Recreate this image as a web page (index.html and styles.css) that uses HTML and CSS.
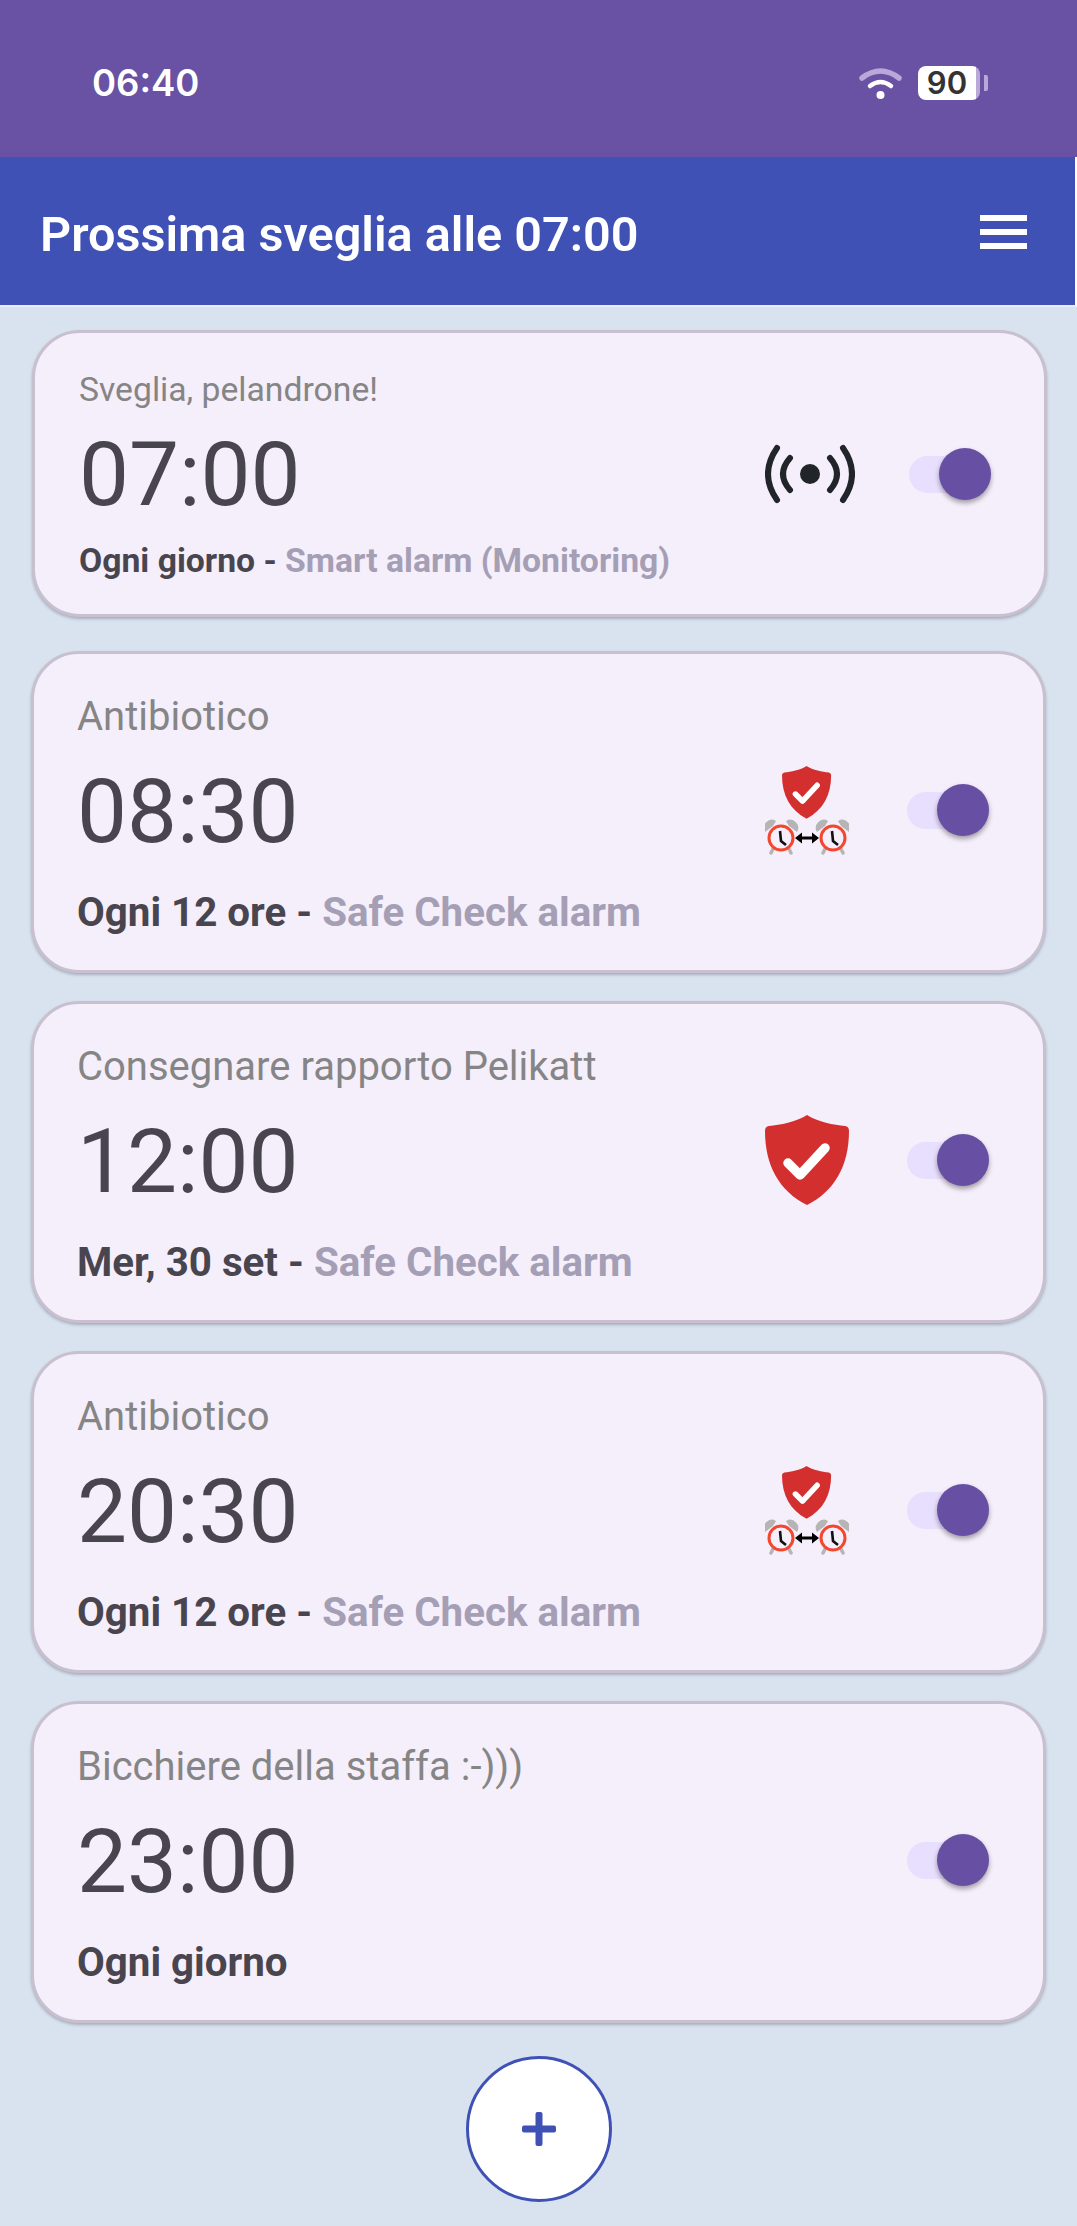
FILE: index.html
```html
<!DOCTYPE html>
<html lang="it">
<head>
  <meta charset="UTF-8">
  <meta name="viewport" content="width=device-width, initial-scale=1.0">
  <title>Sveglie</title>
  <link rel="stylesheet" href="styles.css">
</head>
<body>
  <svg class="defs" width="0" height="0" aria-hidden="true">
    <defs>
      <g id="shield">
        <path d="M42 0C31 7 15 10 4 11Q0 11.500 0 16C0 50 14 76 42 90C70 76 84 50 84 16Q84 11.500 80 11C69 10 53 7 42 0Z" fill="#d32f2f"></path>
        <path d="M23 48L35 60L60 33" fill="none" stroke="#fff" stroke-width="9.500" stroke-linecap="round" stroke-linejoin="round"></path>
      </g>
      <g id="clock">
        <path d="M-16 -6A8 8 0 0 1 -5 -17L-8 -12L-12 -9ZM16 -6A8 8 0 0 0 5 -17L8 -12L12 -9Z" fill="#b5b5b5"></path>
        <path d="M-8 11L-10 15M8 11L10 15" stroke="#b5b5b5" stroke-width="3.500" stroke-linecap="round"></path>
        <circle r="12" fill="#f5eefb" stroke="#f4472f" stroke-width="3"></circle>
        <path d="M-1 -7L0 3L5 7" fill="none" stroke="#111" stroke-width="2.600"></path>
      </g>
      <g id="shield-clocks">
        <use href="#shield" transform="translate(17 1) scale(0.585)"></use>
        <use href="#clock" transform="translate(16 73)"></use>
        <use href="#clock" transform="translate(68 73)"></use>
        <path d="M34 73H50" stroke="#000" stroke-width="3"></path>
        <path d="M37 67.500L30 73L37 78.500ZM47 67.500L54 73L47 78.500Z" fill="#000"></path>
      </g>
    </defs>
  </svg>

  <div class="status-bar">
    <span class="clock">06:40</span>
    <div class="status-icons">
      <svg class="wifi" width="43" height="32" viewBox="0 0 43 32">
        <path d="M3 11Q21.500 -3 40 11" fill="none" stroke="#b9a8d8" stroke-width="5.500" stroke-linecap="round"></path>
        <path d="M11 19Q21.500 11 32 19" fill="none" stroke="#fff" stroke-width="4.500" stroke-linecap="round"></path>
        <circle cx="21.500" cy="28" r="4" fill="#fff"></circle>
      </svg>
      <div class="battery"><span>90</span></div>
      <div class="battery-nub"></div>
    </div>
  </div>

  <header class="app-bar">
    <h1>Prossima sveglia alle 07:00</h1>
    <div class="menu-button"><i></i><i></i><i></i></div>
  </header>

  <main class="alarm-list">
    <div class="alarm alarm-first">
      <div class="alarm-title">Sveglia, pelandrone!</div>
      <div class="alarm-row">
        <div class="alarm-time">07:00</div>
        <svg class="alarm-icon" width="90" height="60" viewBox="-45 -30 90 60">
          <g fill="none" stroke="#212529" stroke-width="6" stroke-linecap="round">
            <path d="M-33 -26Q-51 0 -33 26M33 -26Q51 0 33 26"></path>
            <path d="M-20 -16Q-34 0 -20 16M20 -16Q34 0 20 16"></path>
          </g>
          <circle r="10" fill="#212529"></circle>
        </svg>
        <div class="toggle"><div class="thumb"></div></div>
      </div>
      <div class="alarm-info"><b>Ogni giorno - </b><span>Smart alarm (Monitoring)</span></div>
    </div>

    <div class="alarm">
      <div class="alarm-title">Antibiotico</div>
      <div class="alarm-row">
        <div class="alarm-time">08:30</div>
        <svg class="alarm-icon" width="84" height="90" viewBox="0 0 84 90"><use href="#shield-clocks"></use></svg>
        <div class="toggle"><div class="thumb"></div></div>
      </div>
      <div class="alarm-info"><b>Ogni 12 ore - </b><span>Safe Check alarm</span></div>
    </div>

    <div class="alarm">
      <div class="alarm-title">Consegnare rapporto Pelikatt</div>
      <div class="alarm-row">
        <div class="alarm-time">12:00</div>
        <svg class="alarm-icon" width="84" height="90" viewBox="0 0 84 90"><use href="#shield"></use></svg>
        <div class="toggle"><div class="thumb"></div></div>
      </div>
      <div class="alarm-info"><b>Mer, 30 set - </b><span>Safe Check alarm</span></div>
    </div>

    <div class="alarm">
      <div class="alarm-title">Antibiotico</div>
      <div class="alarm-row">
        <div class="alarm-time">20:30</div>
        <svg class="alarm-icon" width="84" height="90" viewBox="0 0 84 90"><use href="#shield-clocks"></use></svg>
        <div class="toggle"><div class="thumb"></div></div>
      </div>
      <div class="alarm-info"><b>Ogni 12 ore - </b><span>Safe Check alarm</span></div>
    </div>

    <div class="alarm">
      <div class="alarm-title">Bicchiere della staffa :-)))</div>
      <div class="alarm-row">
        <div class="alarm-time">23:00</div>
        <div class="toggle"><div class="thumb"></div></div>
      </div>
      <div class="alarm-info"><b>Ogni giorno</b></div>
    </div>
  </main>

  <div class="add-row">
    <button class="add-button">
      <svg width="34" height="34" viewBox="0 0 34 34"><rect x="13.500" width="7" height="34" rx="2" fill="#3f51b5"></rect><rect y="13.500" width="34" height="7" rx="2" fill="#3f51b5"></rect></svg>
    </button>
  </div>
</body>
</html>
```

FILE: styles.css
```css
:root {
  --purple: #6750a4;
  --blue: #3f51b5;
  --page: #d8e3ef;
  --card: #f5eefb;
  --card-border: #c8c0cf;
  --text-dark: #49454f;
  --text-soft: #a59fb5;
}

* {
  box-sizing: border-box;
}

body {
  margin: 0;
  height: 2226px;
  overflow: hidden;
  background: var(--page);
  font-family: Roboto, sans-serif;
}

.defs {
  position: absolute;
}

.status-bar {
  display: flex;
  align-items: center;
  justify-content: space-between;
  height: 157px;
  padding: 8px 89px 0 92px;
  background: #6951a3;
  color: #fff;
}

.clock {
  font-family: Inter, sans-serif;
  font-size: 36.500px;
  font-weight: 600;
}

.status-icons {
  display: flex;
  align-items: center;
}

.wifi {
  margin-right: 16px;
}

.battery {
  display: flex;
  align-items: center;
  justify-content: center;
  width: 62px;
  height: 34px;
  padding-right: 4px;
  background: linear-gradient(to right, #fff 58px, #b9a8d8 58px);
  border-radius: 8px;
  color: #333;
  font-family: Inter, sans-serif;
  font-size: 31px;
  font-weight: 600;
}

.battery-nub {
  width: 4px;
  height: 16px;
  margin-left: 4px;
  background: #b9a8d8;
  border-radius: 0 2px 2px 0;
}

.app-bar {
  display: flex;
  align-items: center;
  justify-content: space-between;
  height: 150px;
  padding: 6px 48px 0 40px;
  background: var(--blue);
  border-right: 2px solid #fff;
  border-bottom: 2px solid #e8edf5;
  color: #fff;
}

.app-bar h1 {
  margin: 0;
  font-size: 48.600px;
  font-weight: 600;
}

.menu-button {
  display: flex;
  flex-direction: column;
  gap: 8px;
  width: 47px;
  margin-bottom: 4px;
}

.menu-button i {
  height: 6px;
  background: #fff;
}

.alarm-list {
  display: flex;
  flex-direction: column;
  gap: 28px;
  padding: 23px 31px 0;
}

.alarm {
  height: 322px;
  padding: 41px 54px 0 43px;
  background: var(--card);
  border: 3px solid var(--card-border);
  border-radius: 48px;
  box-shadow: 0 2px 3px rgba(60, 50, 80, 0.3);
}

.alarm-first {
  height: 287px;
  margin: 0 -1px 6px 1px;
  padding: 37px 53px 0 44px;
}

.alarm-title {
  color: #858585;
  font-size: 40px;
  line-height: 44px;
}

.alarm-row {
  display: flex;
  align-items: center;
  height: 104px;
  margin: 20px 0 28px;
}

.alarm-time {
  flex: 1;
  color: var(--text-dark);
  font-size: 89px;
}

.alarm-icon {
  margin: 0 58px 2px 0;
}

.toggle {
  position: relative;
  width: 82px;
  height: 37px;
  margin-bottom: 2px;
  background: #e8defd;
  border-radius: 19px;
}

.thumb {
  position: absolute;
  top: -8px;
  right: 0;
  width: 52px;
  height: 52px;
  background: var(--purple);
  border-radius: 50%;
  box-shadow: 0 3px 5px rgba(0, 0, 0, 0.35);
}

.alarm-info {
  color: var(--text-soft);
  font-size: 40.300px;
  font-weight: 700;
  line-height: 44px;
}

.alarm-info b {
  color: var(--text-dark);
  font-weight: 700;
}

.alarm-first .alarm-title {
  font-size: 33.700px;
  line-height: 40px;
}

.alarm-first .alarm-row {
  height: 98px;
  margin: 15px 0 18px;
}

.alarm-first .alarm-time {
  font-size: 89px;
}

.alarm-first .alarm-icon {
  margin: 0 54px 0 0;
}

.alarm-first .toggle {
  margin-bottom: 0;
}

.alarm-first .alarm-info {
  font-size: 33.700px;
  line-height: 40px;
}

.add-row {
  display: flex;
  justify-content: center;
  margin-top: 33px;
}

.add-button {
  display: flex;
  align-items: center;
  justify-content: center;
  width: 146px;
  height: 146px;
  padding: 0;
  background: #fff;
  border: 3px solid var(--blue);
  border-radius: 50%;
}
```
